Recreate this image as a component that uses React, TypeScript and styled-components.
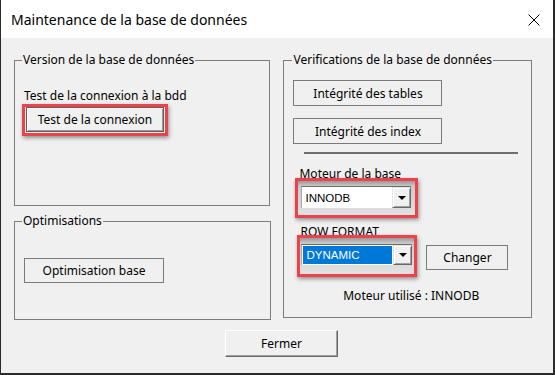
import styled, { createGlobalStyle } from "styled-components";

const GlobalStyle = createGlobalStyle`
  html, body {
    margin: 0;
    padding: 0;
    background: #2b2b2b;
  }
  body {
    font-family: "Noto Sans", "Liberation Sans", sans-serif;
    font-size: 12px;
    color: #000;
  }
`;

const Window = styled.div`
  margin-left: 1px;
  width: 552px;
  height: 373px;
  display: flex;
  flex-direction: column;
  background: #f0f0f0;
`;

const TitleBar = styled.div`
  height: 38px;
  flex-shrink: 0;
  background: #fff;
  display: flex;
  align-items: center;
  justify-content: space-between;
  padding: 0 13px 0 10px;
  box-sizing: border-box;
`;

const Title = styled.span`
  font-size: 14px;
  line-height: 18px;
  margin-top: 2px;
`;

const CloseIcon = styled.svg`
  width: 12px;
  height: 12px;
  margin-top: 1px;
`;

const Body = styled.div`
  flex: 1;
  padding: 14px 21px 0 13px;
  display: flex;
  flex-direction: column;
`;

const Columns = styled.div`
  display: flex;
  gap: 12px;
`;

const Column = styled.div<{ $width: number }>`
  width: ${(p) => p.$width}px;
  display: flex;
  flex-direction: column;
  gap: 7px;
`;

const Group = styled.fieldset<{ $height: number; $width?: number; $padTop: number }>`
  margin: 0;
  min-width: 0;
  box-sizing: border-box;
  width: ${(p) => (p.$width ? `${p.$width}px` : "100%")};
  height: ${(p) => p.$height}px;
  border: 1px solid #7c7c7c;
  padding: ${(p) => p.$padTop}px 8px 0 9px;
  display: flex;
  flex-direction: column;
  align-items: flex-start;
`;

const Legend = styled.legend<{ $shift: number }>`
  margin-left: ${(p) => p.$shift}px;
  padding: 0 1px;
  line-height: 16px;
`;

const Label = styled.div<{ $left?: number }>`
  line-height: 16px;
  margin-left: ${(p) => p.$left ?? 0}px;
  white-space: nowrap;
`;

const Button = styled.button<{ $w: number; $h: number; $variant?: "flat" | "default" | "raised" }>`
  width: ${(p) => p.$w}px;
  height: ${(p) => p.$h}px;
  padding: 0;
  margin: 0;
  font: inherit;
  font-size: 12px;
  color: #000;
  background: #f0f0f0;
  box-sizing: border-box;
  flex-shrink: 0;
  ${(p) =>
    p.$variant === "raised"
      ? `border: 1px solid; border-color: #fff #696969 #696969 #fff; box-shadow: inset -1px -1px #a0a0a0;`
      : p.$variant === "default"
      ? `border: 1px solid #5f5f5f; box-shadow: inset 1px 1px #fff, inset -1px -1px #9a9a9a;`
      : `border: 1px solid #7a7a7a;`}
`;

const Highlight = styled.div<{ $top?: number; $left?: number }>`
  border: 3px solid #ee4149;
  box-shadow: 1px 2px 4px rgba(0, 0, 0, 0.4);
  margin-top: ${(p) => p.$top ?? 0}px;
  margin-left: ${(p) => p.$left ?? 0}px;
  position: relative;
  flex-shrink: 0;
`;

const ButtonSlot = styled.div`
  padding: 0 1px 1px 1px;
  display: flex;
`;

const ComboFrame = styled.div<{ $w: number; $pad: string }>`
  width: ${(p) => p.$w}px;
  box-sizing: border-box;
  padding: ${(p) => p.$pad};
  background: linear-gradient(to bottom, #9a9a9a 0, #b4b4b4 3px, #c9c9c9 5px, #e2e2e2 100%);
`;

const ComboBox = styled.div<{ $h: number }>`
  display: flex;
  height: ${(p) => p.$h}px;
  border-top: 1px solid #6c6c6c;
  border-left: 1px solid #a8a8a8;
`;

const ComboField = styled.div<{ $selected?: boolean }>`
  flex: 1;
  display: flex;
  align-items: center;
  padding-left: 3px;
  font-family: "Liberation Sans", Arial, sans-serif;
  font-size: 11.5px;
  background: ${(p) => (p.$selected ? "#0078d7" : "#fff")};
  color: ${(p) => (p.$selected ? "#fff" : "#000")};
  border: ${(p) => (p.$selected ? "1px solid #fff" : "none")};
`;

const ComboArrow = styled.div`
  width: 19px;
  flex-shrink: 0;
  display: flex;
  align-items: center;
  justify-content: center;
  background: #f0f0f0;
  box-sizing: border-box;
  border: 1px solid;
  border-color: #e3e3e3 #696969 #696969 #e3e3e3;
  box-shadow: inset 1px 1px #fff, inset -1px -1px #a0a0a0;
`;

const Triangle = styled.span`
  width: 0;
  height: 0;
  border-left: 4px solid transparent;
  border-right: 4px solid transparent;
  border-top: 4px solid #000;
`;

const Separator = styled.div`
  width: 214px;
  height: 2px;
  background: #6e6e6e;
  margin: 8px 0 0 11px;
`;

const FormatRow = styled.div`
  display: flex;
  align-items: flex-start;
  gap: 9px;
  margin-left: 4px;
`;

const Status = styled.div`
  align-self: stretch;
  text-align: center;
  line-height: 16px;
  margin-top: 11px;
  padding-left: 6px;
`;

const Footer = styled.div`
  display: flex;
  padding-left: 211px;
  margin-top: 10px;
`;

interface ComboProps {
  value: string;
  width: number;
  pad: string;
  height: number;
  selected?: boolean;
}

function Combo({ value, width, pad, height, selected }: ComboProps) {
  return (
    <ComboFrame $w={width} $pad={pad}>
      <ComboBox $h={height}>
        <ComboField $selected={selected}>{value}</ComboField>
        <ComboArrow>
          <Triangle />
        </ComboArrow>
      </ComboBox>
    </ComboFrame>
  );
}

function App() {
  return (
    <>
      <GlobalStyle />
      <Window>
        <TitleBar>
          <Title>Maintenance de la base de données</Title>
          <CloseIcon viewBox="0 0 12 12">
            <path d="M0.5 0.5 L11.5 11.5 M11.5 0.5 L0.5 11.5" stroke="#000" strokeWidth="1" fill="none" />
          </CloseIcon>
        </TitleBar>
        <Body>
          <Columns>
            <Column $width={258}>
              <Group $height={154} $width={256} $padTop={20}>
                <Legend $shift={-2}>Version de la base de données</Legend>
                <Label>Test de la connexion à la bdd</Label>
                <Highlight $left={-2}>
                  <ButtonSlot>
                    <Button $w={138} $h={25} $variant="default">
                      Test de la connexion
                    </Button>
                  </ButtonSlot>
                </Highlight>
              </Group>
              <Group $height={107} $padTop={29}>
                <Legend $shift={-2}>Optimisations</Legend>
                <Button $w={140} $h={25}>
                  Optimisation base
                </Button>
              </Group>
            </Column>
            <Column $width={249}>
              <Group $height={266} $padTop={12}>
                <Legend $shift={-1}>Verifications de la base de données</Legend>
                <Button $w={149} $h={26}>
                  Intégrité des tables
                </Button>
                <Button $w={149} $h={26} style={{ marginTop: 12 }}>
                  Intégrité des index
                </Button>
                <Separator />
                <Label $left={6} style={{ marginTop: 12 }}>
                  Moteur de la base
                </Label>
                <Highlight $top={-4} $left={2}>
                  <Combo value="INNODB" width={117} pad="5px 4px 7px 3px" height={21} />
                </Highlight>
                <Label $left={7} style={{ marginTop: 6 }}>
                  ROW FORMAT
                </Label>
                <FormatRow style={{ marginTop: -5 }}>
                  <Highlight>
                    <Combo value="DYNAMIC" width={114} pad="6px 2px 9px 1px" height={20} selected />
                  </Highlight>
                  <Button $w={82} $h={25} style={{ marginTop: 10 }}>
                    Changer
                  </Button>
                </FormatRow>
                <Status>Moteur utilisé : INNODB</Status>
              </Group>
            </Column>
          </Columns>
          <Footer>
            <Button $w={113} $h={27} $variant="raised">
              Fermer
            </Button>
          </Footer>
        </Body>
      </Window>
    </>
  );
}

export default App;
